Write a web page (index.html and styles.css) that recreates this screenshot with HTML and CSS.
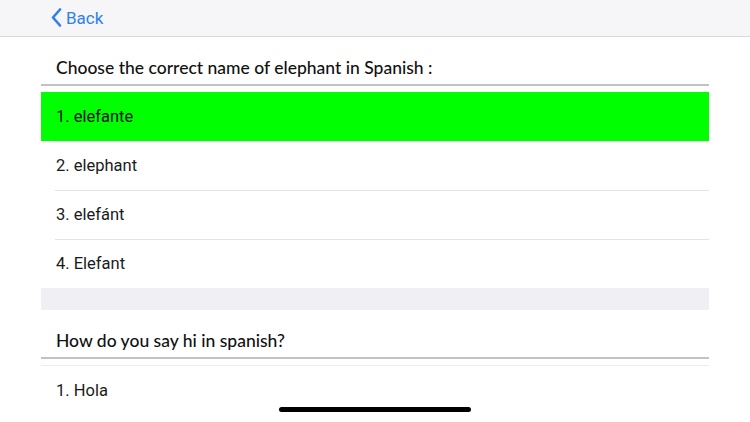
FILE: index.html
```html
<!DOCTYPE html>
<html lang="en">
<head>
<meta charset="utf-8">
<title>Quiz</title>
<link rel="stylesheet" href="styles.css">
</head>
<body>
<header class="navbar">
  <a class="back" href="#">
    <svg class="chevron" width="11" height="19" viewBox="0 0 11 19"><path d="M9 1.5 L2 9.5 L9 17.5" fill="none" stroke="currentColor" stroke-width="2.6" stroke-linecap="round" stroke-linejoin="round"/></svg>
    <span>Back</span>
  </a>
</header>
<main class="content">
  <section class="question">
    <h2 class="q-title">Choose the correct name of elephant in Spanish :</h2>
    <ul class="answers">
      <li class="answer correct">1. elefante</li>
      <li class="answer">2. elephant</li>
      <li class="answer">3. elefánt</li>
      <li class="answer">4. Elefant</li>
    </ul>
  </section>
  <div class="spacer"></div>
  <section class="question">
    <h2 class="q-title">How do you say hi in spanish?</h2>
    <ul class="answers bordered">
      <li class="answer">1. Hola</li>
    </ul>
  </section>
</main>
<div class="home-indicator"></div>
</body>
</html>
```
FILE: styles.css
```css
html, body {
  margin: 0;
  padding: 0;
}
body {
  width: 750px;
  height: 422px;
  overflow: hidden;
  background: #ffffff;
  position: relative;
  font-family: Roboto, "Liberation Sans", sans-serif;
}
.navbar {
  height: 36px;
  background: #f6f6f8;
  border-bottom: 1px solid #d9d9dc;
  display: flex;
  align-items: center;
  padding-left: 51px;
}
.back {
  display: flex;
  align-items: center;
  gap: 4px;
  color: #2e7ff1;
  text-decoration: none;
  font-size: 17px;
  margin-top: -1px;
}
.chevron {
  display: block;
}
.content {
  margin: 0 41px;
}
.question {
  display: flex;
  flex-direction: column;
}
.q-title {
  margin: 0;
  height: 49px;
  box-sizing: border-box;
  padding: 20px 0 0 15px;
  font-family: Lato, "Noto Sans", sans-serif;
  font-weight: 500;
  font-size: 17.5px;
  line-height: 22px;
  color: #111111;
  border-bottom: 2px solid #c2c2c2;
}
.answers {
  list-style: none;
  margin: 6px 0 0 0;
  padding: 0;
}
.answer {
  height: 49px;
  box-sizing: border-box;
  display: flex;
  align-items: center;
  padding-left: 15px;
  font-size: 16.5px;
  color: #1a1a1a;
  position: relative;
}
.answer + .answer::before {
  content: "";
  position: absolute;
  left: 14px;
  right: 0;
  top: 0;
  height: 1px;
  background: #e3e3e6;
}
.bordered {
  border-top: 1px solid #ececee;
}
.answer.correct {
  background: #00ff00;
  color: #111111;
}
.spacer {
  height: 22px;
  background: #efeff4;
}
.home-indicator {
  position: absolute;
  left: 279px;
  top: 407px;
  width: 192px;
  height: 5px;
  border-radius: 3px;
  background: #000000;
}
```
